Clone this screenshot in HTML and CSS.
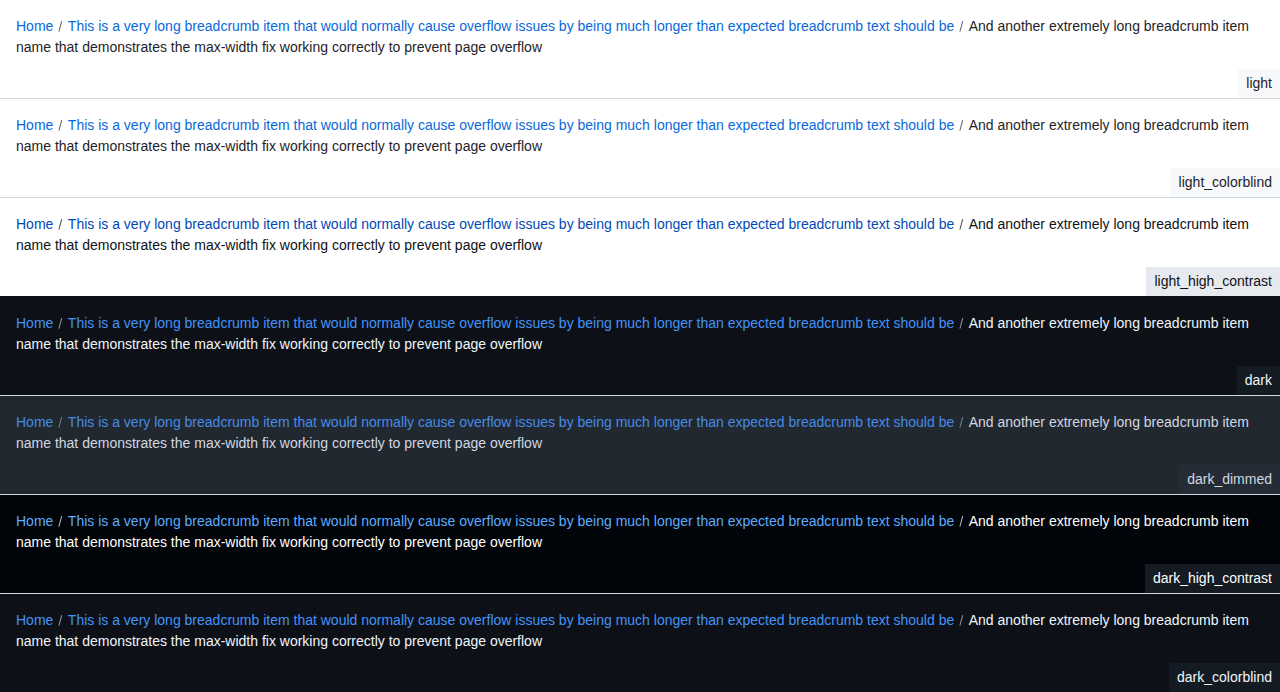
FILE: index.html
```html
<!DOCTYPE html>
<html lang="en">
<head>
<meta charset="utf-8">
<title>Breadcrumbs themes</title>
<link rel="stylesheet" href="styles.css">
</head>
<body>
<div class="panel t-light">
  <nav class="crumbs"><a class="crumb" href="#">Home</a><span class="sep"></span><a class="crumb" href="#">This is a very long breadcrumb item that would normally cause overflow issues by being much longer than expected breadcrumb text should be</a><span class="sep"></span><span class="current">And another extremely long breadcrumb item name that demonstrates the max-width fix working correctly to prevent page overflow</span></nav>
  <div class="label">light</div>
</div>
<div class="panel t-light-cb">
  <nav class="crumbs"><a class="crumb" href="#">Home</a><span class="sep"></span><a class="crumb" href="#">This is a very long breadcrumb item that would normally cause overflow issues by being much longer than expected breadcrumb text should be</a><span class="sep"></span><span class="current">And another extremely long breadcrumb item name that demonstrates the max-width fix working correctly to prevent page overflow</span></nav>
  <div class="label">light_colorblind</div>
</div>
<div class="panel t-light-hc">
  <nav class="crumbs"><a class="crumb" href="#">Home</a><span class="sep"></span><a class="crumb" href="#">This is a very long breadcrumb item that would normally cause overflow issues by being much longer than expected breadcrumb text should be</a><span class="sep"></span><span class="current">And another extremely long breadcrumb item name that demonstrates the max-width fix working correctly to prevent page overflow</span></nav>
  <div class="label">light_high_contrast</div>
</div>
<div class="panel t-dark">
  <nav class="crumbs"><a class="crumb" href="#">Home</a><span class="sep"></span><a class="crumb" href="#">This is a very long breadcrumb item that would normally cause overflow issues by being much longer than expected breadcrumb text should be</a><span class="sep"></span><span class="current">And another extremely long breadcrumb item name that demonstrates the max-width fix working correctly to prevent page overflow</span></nav>
  <div class="label">dark</div>
</div>
<div class="panel t-dark-dimmed">
  <nav class="crumbs"><a class="crumb" href="#">Home</a><span class="sep"></span><a class="crumb" href="#">This is a very long breadcrumb item that would normally cause overflow issues by being much longer than expected breadcrumb text should be</a><span class="sep"></span><span class="current">And another extremely long breadcrumb item name that demonstrates the max-width fix working correctly to prevent page overflow</span></nav>
  <div class="label">dark_dimmed</div>
</div>
<div class="panel t-dark-hc">
  <nav class="crumbs"><a class="crumb" href="#">Home</a><span class="sep"></span><a class="crumb" href="#">This is a very long breadcrumb item that would normally cause overflow issues by being much longer than expected breadcrumb text should be</a><span class="sep"></span><span class="current">And another extremely long breadcrumb item name that demonstrates the max-width fix working correctly to prevent page overflow</span></nav>
  <div class="label">dark_high_contrast</div>
</div>
<div class="panel t-dark-cb">
  <nav class="crumbs"><a class="crumb" href="#">Home</a><span class="sep"></span><a class="crumb" href="#">This is a very long breadcrumb item that would normally cause overflow issues by being much longer than expected breadcrumb text should be</a><span class="sep"></span><span class="current">And another extremely long breadcrumb item name that demonstrates the max-width fix working correctly to prevent page overflow</span></nav>
  <div class="label">dark_colorblind</div>
</div>
</body>
</html>
```
FILE: styles.css
```css
html, body {
  margin: 0;
  padding: 0;
}
body {
  font-family: "Liberation Sans", Arial, sans-serif;
  font-size: 14px;
  line-height: 21px;
}
.panel {
  display: flex;
  flex-direction: column;
  padding: 16px 0 0 16px;
  box-sizing: border-box;
  height: 99px;
  border-bottom: 1px solid #d1d9e0;
  background: var(--bg);
  color: var(--fg);
}
.crumbs {
  padding-right: 16px;
}
.crumb {
  color: var(--accent);
  text-decoration: none;
}
.current {
  color: var(--fg);
}
.sep {
  display: inline-block;
  height: 0.8em;
  width: 0;
  margin: 0 7px 0 6.5px;
  border-right: 1.4px solid var(--muted);
  transform: rotate(15deg) translateY(0.0625em);
}
.label {
  align-self: flex-end;
  margin-top: auto;
  padding: 4px 8px;
  background: var(--label-bg);
  color: var(--fg);
}
.t-light {
  --bg: #ffffff; --fg: #1f2328; --muted: #59636e; --accent: #0969da; --label-bg: #f6f8fa;
}
.t-light-cb {
  --bg: #ffffff; --fg: #1f2328; --muted: #59636e; --accent: #0969da; --label-bg: #f6f8fa;
}
.t-light-hc {
  --bg: #ffffff; --fg: #0e1116; --muted: #454c54; --accent: #0349b4; --label-bg: #e6eaef;
  border-bottom-color: #0d1117;
}
.t-dark {
  --bg: #0d1117; --fg: #f0f6fc; --muted: #9198a1; --accent: #4493f8; --label-bg: #151b23;
}
.t-dark-dimmed {
  --bg: #212830; --fg: #d1d7e0; --muted: #768390; --accent: #478be6; --label-bg: #262c36;
}
.t-dark-hc {
  --bg: #010409; --fg: #ffffff; --muted: #b7bdc8; --accent: #5cacff; --label-bg: #151b23;
}
.t-dark-cb {
  --bg: #0d1117; --fg: #f0f6fc; --muted: #9198a1; --accent: #4493f8; --label-bg: #151b23;
  border-bottom: none;
  height: 98px;
}
```
